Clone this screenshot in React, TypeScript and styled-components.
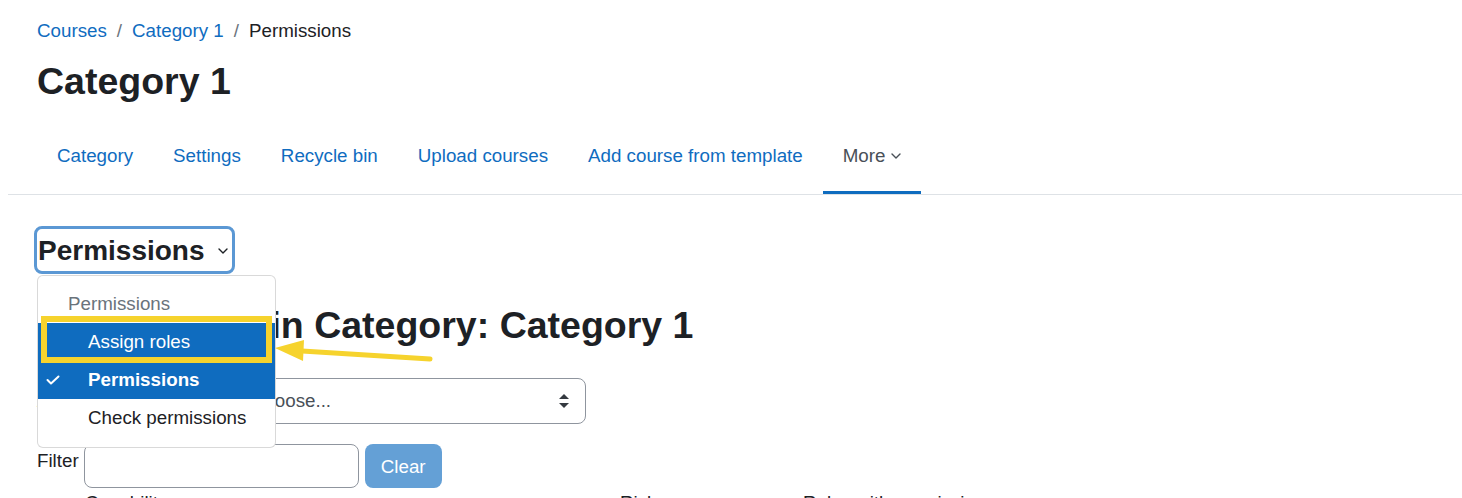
import React from "react";
import styled, { createGlobalStyle } from "styled-components";

const GlobalStyle = createGlobalStyle`
  html, body {
    margin: 0;
    padding: 0;
    background: #fff;
  }
  body {
    margin: 8px 0 0 8px;
    font-family: "Liberation Sans", Arial, sans-serif;
    font-size: 18.75px;
    line-height: 28px;
    color: #1d2125;
    overflow: hidden;
  }
  * {
    box-sizing: border-box;
  }
`;

const Page = styled.div`
  width: 1454px;
`;

const Header = styled.div`
  padding: 9px 0 0 29px;
`;

const Breadcrumb = styled.nav`
  display: flex;
  align-items: center;
  height: 28px;
`;

const Crumb = styled.span<{ $current?: boolean }>`
  color: ${(p) => (p.$current ? "#1d2125" : "#0f6cbf")};
`;

const Sep = styled.span`
  color: #6a737b;
  padding: 0 10px;
`;

const Title = styled.h1`
  margin: 14px 0 0;
  font-size: 37.5px;
  line-height: 45px;
  font-weight: 700;
`;

const Tabs = styled.ul`
  display: flex;
  list-style: none;
  margin: 14px 0 0;
  padding: 0 0 0 29px;
  border-bottom: 1px solid #dee2e6;
`;

const Tab = styled.li<{ $active?: boolean }>`
  display: flex;
  align-items: center;
  gap: 6px;
  padding: 24px 20px 21px;
  border-bottom: 3px solid ${(p) => (p.$active ? "#0f6cbf" : "transparent")};
  color: ${(p) => (p.$active ? "#495057" : "#0f6cbf")};
`;

const Content = styled.div`
  padding: 31px 0 0 29px;
`;

const JumpWrap = styled.div`
  position: relative;
`;

const JumpButton = styled.div`
  display: inline-flex;
  align-items: center;
  margin-left: -3px;
  height: 48px;
  padding: 1px 4px 0 1px;
  border: 3px solid #5b98d4;
  border-radius: 8px;
  font-size: 28px;
  font-weight: 700;
  line-height: 34px;
  gap: 13px;
`;

const Menu = styled.div`
  position: absolute;
  left: 0;
  top: 49px;
  width: 239px;
  padding: 9px 0 10px;
  background: #fff;
  border: 1px solid rgba(0, 0, 0, 0.15);
  border-radius: 6px;
  z-index: 5;
`;

const MenuHeader = styled.div`
  height: 38px;
  display: flex;
  align-items: center;
  padding-left: 30px;
  color: #6a737b;
`;

const MenuItem = styled.div<{ $active?: boolean; $bold?: boolean }>`
  position: relative;
  height: 38px;
  display: flex;
  align-items: center;
  padding-left: 50px;
  background: ${(p) => (p.$active ? "#0f6cbf" : "transparent")};
  color: ${(p) => (p.$active ? "#fff" : "#1d2125")};
  font-weight: ${(p) => (p.$bold ? 700 : 400)};
`;

const Check = styled.svg`
  position: absolute;
  left: 8px;
  top: 14px;
`;

const Highlight = styled.div`
  position: absolute;
  left: 3px;
  top: 40px;
  width: 231px;
  height: 47px;
  border: 6px solid #f6d32d;
  pointer-events: none;
`;

const Arrow = styled.svg`
  position: absolute;
  left: 233px;
  top: 104px;
  z-index: 6;
`;

const Heading = styled.h2`
  margin: 29px 0 0;
  font-size: 37.5px;
  line-height: 45px;
  font-weight: 700;
`;

const FormRow = styled.div<{ $top: number }>`
  display: flex;
  align-items: center;
  margin-top: ${(p) => p.$top}px;
`;

const Label = styled.label<{ $nudge?: boolean }>`
  margin-right: 5px;
  align-self: ${(p) => (p.$nudge ? "flex-start" : "center")};
  padding-top: ${(p) => (p.$nudge ? "3px" : "0")};
`;

const Select = styled.div`
  position: relative;
  display: flex;
  align-items: center;
  width: 351px;
  height: 46px;
  padding-left: 15px;
  border: 1px solid #8f959e;
  border-radius: 8px;
  color: #495057;
`;

const SelectArrows = styled.svg`
  position: absolute;
  right: 16px;
  top: 15px;
`;

const Input = styled.div`
  width: 275px;
  height: 44px;
  border: 1px solid #8f959e;
  border-radius: 8px;
`;

const ClearButton = styled.div`
  display: flex;
  align-items: center;
  justify-content: center;
  width: 77px;
  height: 44px;
  margin-left: 6px;
  padding-top: 1px;
  border-radius: 8px;
  background: #64a0d6;
  color: #fff;
`;

const TableHead = styled.div`
  position: relative;
  height: 28px;
  margin-top: 1px;
  color: #1d2125;
`;

const HeadCell = styled.span<{ $x: number }>`
  position: absolute;
  left: ${(p) => p.$x}px;
  top: 0;
  white-space: nowrap;
`;

const Chevron = ({ color }: { color: string }) => (
  <svg width="10" height="6" viewBox="0 0 10 6">
    <polyline
      points="1,1 5,5 9,1"
      fill="none"
      stroke={color}
      strokeWidth="1.4"
      strokeLinecap="round"
      strokeLinejoin="round"
    />
  </svg>
);

const tabs = [
  "Category",
  "Settings",
  "Recycle bin",
  "Upload courses",
  "Add course from template",
];

export default function App() {
  return (
    <Page>
      <GlobalStyle />
      <Header>
        <Breadcrumb>
          <Crumb>Courses</Crumb>
          <Sep>/</Sep>
          <Crumb>Category 1</Crumb>
          <Sep>/</Sep>
          <Crumb $current>Permissions</Crumb>
        </Breadcrumb>
        <Title>Category 1</Title>
      </Header>
      <Tabs>
        {tabs.map((t) => (
          <Tab key={t}>{t}</Tab>
        ))}
        <Tab $active>
          More
          <Chevron color="#495057" />
        </Tab>
      </Tabs>
      <Content>
        <JumpWrap>
          <JumpButton>
            Permissions
            <Chevron color="#1d2125" />
          </JumpButton>
          <Menu>
            <MenuHeader>Permissions</MenuHeader>
            <MenuItem $active>Assign roles</MenuItem>
            <MenuItem $active $bold>
              <Check width="14" height="10" viewBox="0 0 14 10">
                <polyline
                  points="1.5,5 5,8.5 12.5,1.5"
                  fill="none"
                  stroke="#fff"
                  strokeWidth="2"
                  strokeLinecap="round"
                  strokeLinejoin="round"
                />
              </Check>
              Permissions
            </MenuItem>
            <MenuItem>Check permissions</MenuItem>
            <Highlight />
          </Menu>
          <Arrow width="170" height="40" viewBox="0 0 170 40">
            <line
              x1="32"
              y1="21"
              x2="160"
              y2="29"
              stroke="#f6d32d"
              strokeWidth="5"
              strokeLinecap="round"
            />
            <polygon points="5,18 34,10 33,31" fill="#f6d32d" />
          </Arrow>
        </JumpWrap>
        <Heading>Permissions in Category: Category 1</Heading>
        <FormRow $top={30}>
          <Label>Advanced role override</Label>
          <Select>
            Choose...
            <SelectArrows width="10" height="14" viewBox="0 0 10 14">
              <polygon points="5,0 10,5 0,5" fill="#343a40" />
              <polygon points="0,9 10,9 5,14" fill="#343a40" />
            </SelectArrows>
          </Select>
        </FormRow>
        <FormRow $top={20}>
          <Label $nudge>Filter</Label>
          <Input />
          <ClearButton>Clear</ClearButton>
        </FormRow>
        <TableHead>
          <HeadCell $x={48}>Capability</HeadCell>
          <HeadCell $x={583}>Risks</HeadCell>
          <HeadCell $x={766}>Roles with permission</HeadCell>
        </TableHead>
      </Content>
    </Page>
  );
}
